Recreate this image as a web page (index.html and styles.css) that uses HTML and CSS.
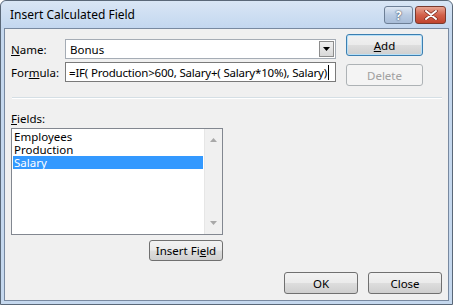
FILE: index.html
```html
<!DOCTYPE html>
<html lang="en">
<head>
  <meta charset="UTF-8">
  <title>Insert Calculated Field</title>
  <link rel="stylesheet" href="styles.css">
</head>
<body>

  <div class="window">
    <div class="titlebar">
      <span class="title">Insert Calculated Field</span>
      <div class="caption-btns">
        <span class="cap-btn help">?</span>
        <span class="cap-btn close">
          <svg width="14" height="10" viewBox="0 0 14 10">
            <path d="M2 1 L12 9 M12 1 L2 9" stroke="#7a2a1e" stroke-width="3.4" stroke-linecap="round"/>
            <path d="M2 1 L12 9 M12 1 L2 9" stroke="#fff" stroke-width="2" stroke-linecap="round"/>
          </svg>
        </span>
      </div>
    </div>

    <div class="client">
      <div class="top">
        <div class="form">
          <div class="row">
            <label class="lbl"><u>N</u>ame:</label>
            <div class="combo">
              <span class="combo-text">Bonus</span>
              <span class="combo-arrow">
                <svg width="7" height="4" viewBox="0 0 7 4"><path d="M0 0 H7 L3.5 4 Z" fill="#000"/></svg>
              </span>
            </div>
          </div>
          <div class="row">
            <label class="lbl">For<u>m</u>ula:</label>
            <div class="textbox">=IF( Production&gt;600, Salary+( Salary*10%), Salary)<span class="caret"></span></div>
          </div>
        </div>
        <div class="side-btns">
          <button class="btn default"><u>A</u>dd</button>
          <button class="btn disabled">Delete</button>
        </div>
      </div>

      <div class="separator"></div>

      <div class="fields">
        <label class="lbl"><u>F</u>ields:</label>
        <div class="listbox">
          <ul class="items">
            <li>Employees</li>
            <li>Production</li>
            <li class="selected">Salary</li>
          </ul>
          <div class="scrollbar">
            <svg width="7" height="4" viewBox="0 0 7 4"><path d="M0 4 H7 L3.5 0 Z" fill="#a8a8a8"/></svg>
            <svg width="7" height="4" viewBox="0 0 7 4"><path d="M0 0 H7 L3.5 4 Z" fill="#a8a8a8"/></svg>
          </div>
        </div>
        <button class="btn insert">Insert Fi<u>e</u>ld</button>
      </div>

      <div class="footer">
        <button class="btn">OK</button>
        <button class="btn">Close</button>
      </div>
    </div>
  </div>

</body>
</html>
```

FILE: styles.css
```css
body {
  margin: 0;
  font-family: 'Noto Sans', 'Open Sans', sans-serif;
  font-size: 11.5px;
  color: #000;
  background: #fff;
}
.window {
  width: 453px;
  height: 305px;
  border: 1px solid #5a6878;
  border-radius: 6px 6px 0 0;
  background: #c5d8ee;
  padding: 0 3px 3px 3px;
  box-sizing: border-box;
  display: flex;
  flex-direction: column;
}
.titlebar {
  height: 27px;
  flex: none;
  display: flex;
  align-items: center;
  justify-content: space-between;
  background: linear-gradient(#d9e6f5, #c3d7ef);
  margin: 0 -3px;
  padding: 0 6px 0 9px;
  border-radius: 6px 6px 0 0;
}
.title {
  font-size: 12px;
}
.caption-btns {
  display: flex;
  gap: 2px;
  align-self: flex-start;
  margin-top: 5px;
}
.cap-btn {
  height: 16px;
  border: 1px solid #6d7f96;
  border-radius: 3px;
  display: flex;
  align-items: center;
  justify-content: center;
}
.help {
  width: 27px;
  background: linear-gradient(#dde7f3, #b9cbe2 50%, #a9bdd8);
  color: #fff;
  font-weight: bold;
  font-size: 12px;
  text-shadow: 0 0 2px #3d4f66, 0 0 1px #3d4f66;
}
.close {
  width: 29px;
  border-color: #7a3a2e;
  background: linear-gradient(#e8a593, #d2614b 50%, #c0442e);
}
.client {
  flex: 1;
  background: #f0f0f0;
  border: 1px solid #7889a0;
  padding: 5px 6px 0 6px;
  display: flex;
  flex-direction: column;
}
.top {
  display: flex;
  gap: 10px;
}
.form {
  width: 325px;
  padding-top: 5px;
  display: flex;
  flex-direction: column;
  gap: 3px;
}
.row {
  display: flex;
  align-items: center;
}
.lbl {
  width: 54px;
  flex: none;
}
.combo {
  width: 271px;
  height: 20px;
  box-sizing: border-box;
  border: 1px solid #a5acb5;
  background: #fff;
  display: flex;
  align-items: center;
  justify-content: space-between;
  padding: 0 1px 0 4px;
}
.combo-arrow {
  width: 15px;
  height: 16px;
  box-sizing: border-box;
  border: 1px solid #8c8c8c;
  background: linear-gradient(#f0f0f0, #d8d8d8);
  display: flex;
  align-items: center;
  justify-content: center;
}
.textbox {
  width: 273px;
  height: 20px;
  box-sizing: border-box;
  border: 1px solid #7a7a7a;
  background: #fff;
  padding: 0 3px;
  display: flex;
  align-items: center;
  white-space: nowrap;
  overflow: hidden;
  letter-spacing: -0.2px;
}
.caret {
  display: inline-block;
  width: 1px;
  height: 15px;
  margin-left: 1px;
  background: #000;
}
.side-btns {
  display: flex;
  flex-direction: column;
  gap: 8px;
}
.btn {
  font-family: inherit;
  font-size: 11.5px;
  color: #000;
  width: 77px;
  height: 22px;
  padding: 0;
  border: 1px solid #707070;
  border-radius: 3px;
  background: linear-gradient(#f2f2f2, #ebebeb 48%, #dddddd 52%, #cfcfcf);
}
.btn.default {
  border-color: #3c7fb1;
  box-shadow: inset 0 0 0 1px #b8e0f7;
}
.btn.disabled {
  color: #a0a0a0;
  border-color: #adb2b5;
  background: #f4f4f4;
}
.separator {
  height: 1px;
  background: #d5dfe5;
  border-bottom: 1px solid #fff;
  margin: 11px 0 0 1px;
}
.fields {
  margin-top: 12px;
  display: flex;
  flex-direction: column;
  width: 212px;
}
.fields .lbl {
  width: auto;
  margin-bottom: 2px;
}
.listbox {
  height: 107px;
  box-sizing: border-box;
  border: 1px solid #828790;
  background: #fff;
  display: flex;
}
.items {
  list-style: none;
  margin: 0;
  padding: 1px;
  flex: 1;
}
.items li {
  height: 13px;
  line-height: 13px;
  padding-left: 1px;
}
.items .selected {
  background: #3399ff;
  color: #fff;
}
.scrollbar {
  width: 17px;
  background: #f0f0f0;
  border-left: 1px solid #e6e6e6;
  display: flex;
  flex-direction: column;
  align-items: center;
  justify-content: space-between;
  padding: 9px 0 9px;
}
.btn.insert {
  align-self: flex-end;
  width: 74px;
  height: 21px;
  margin-top: 5px;
}
.footer {
  margin-top: auto;
  margin-bottom: 6px;
  display: flex;
  justify-content: flex-end;
  gap: 10px;
}
.footer .btn {
  width: 74px;
  height: 22px;
}
```
